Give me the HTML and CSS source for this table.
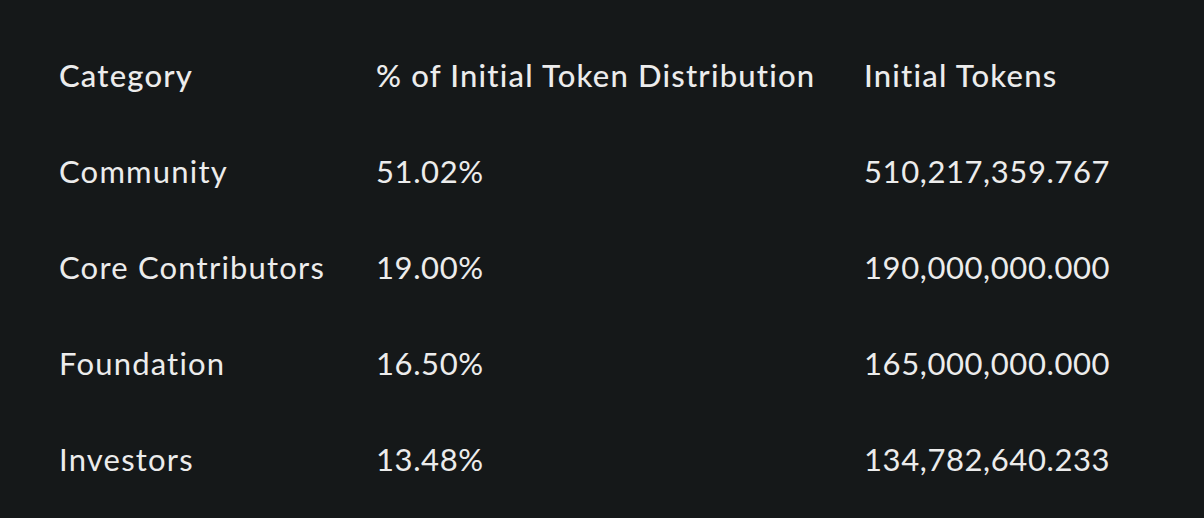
FILE: index.html
```html
<!DOCTYPE html>
<html lang="en">
<head>
<meta charset="utf-8">
<title>Initial Token Distribution</title>
<link rel="stylesheet" href="styles.css">
</head>
<body>
<div class="table">
  <div class="row head">
    <div class="cell">Category</div>
    <div class="cell">% of Initial Token Distribution</div>
    <div class="cell">Initial Tokens</div>
  </div>
  <div class="row">
    <div class="cell">Community</div>
    <div class="cell num">51.02%</div>
    <div class="cell num">510,217,359.767</div>
  </div>
  <div class="row">
    <div class="cell">Core Contributors</div>
    <div class="cell num">19.00%</div>
    <div class="cell num">190,000,000.000</div>
  </div>
  <div class="row">
    <div class="cell">Foundation</div>
    <div class="cell num">16.50%</div>
    <div class="cell num">165,000,000.000</div>
  </div>
  <div class="row">
    <div class="cell">Investors</div>
    <div class="cell num">13.48%</div>
    <div class="cell num">134,782,640.233</div>
  </div>
</div>
</body>
</html>
```
FILE: styles.css
```css
html, body {
  margin: 0;
  padding: 0;
  background: #151819;
}
body {
  width: 1204px;
  height: 518px;
  overflow: hidden;
  font-family: "Lato", "Liberation Sans", sans-serif;
  font-variant-ligatures: none;
  color: #ececec;
}
.table {
  padding: 27px 0 0 59px;
  display: flex;
  flex-direction: column;
}
.row {
  display: grid;
  grid-template-columns: 317px 488px auto;
  height: 96px;
  align-items: center;
  font-size: 31px;
  letter-spacing: 1.2px;
  font-weight: 400;
}
.head {
  font-weight: 500;
}
.cell {
  white-space: nowrap;
}
.num {
  letter-spacing: 0.6px;
}
```
